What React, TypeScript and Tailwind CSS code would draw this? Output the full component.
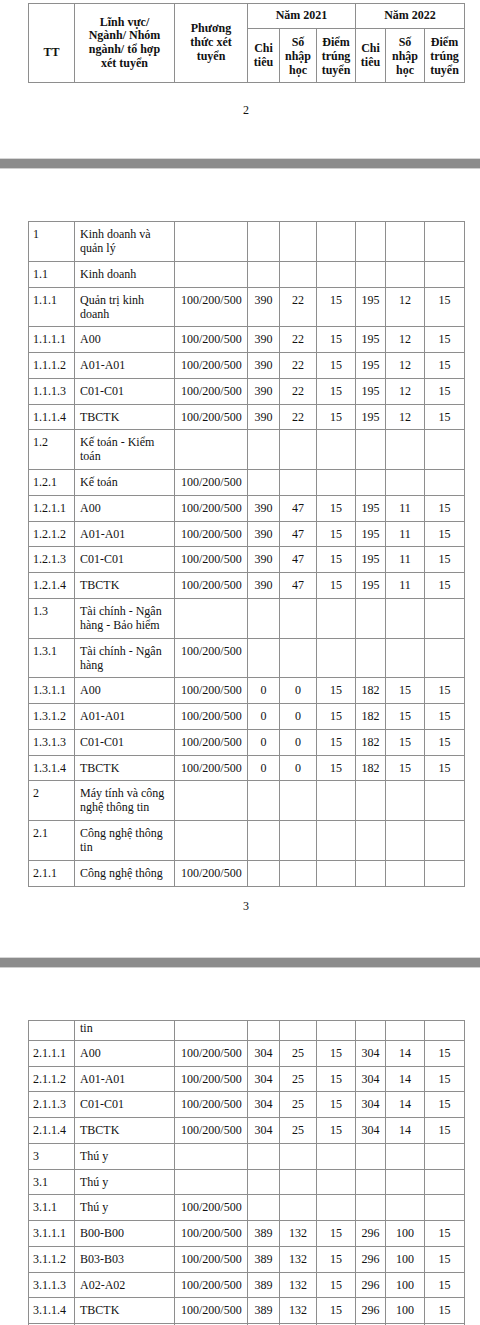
import type { ReactNode } from "react";

type Row = {
    tt: string;
    name: string;
    method?: string;
    values?: string[];
    tall?: boolean;
    short?: boolean;
};

const COLS = "grid w-fit grid-cols-[46px_100px_73px_32px_37px_39px_30px_39px_40px]";

const kd = ["390", "22", "15", "195", "12", "15"];
const kt = ["390", "47", "15", "195", "11", "15"];
const tc = ["0", "0", "15", "182", "15", "15"];
const cn = ["304", "25", "15", "304", "14", "15"];
const ty = ["389", "132", "15", "296", "100", "15"];
const M = "100/200/500";

const page3: Row[] = [
    { tt: "1", name: "Kinh doanh và\nquản lý", tall: true },
    { tt: "1.1", name: "Kinh doanh" },
    { tt: "1.1.1", name: "Quản trị kinh\ndoanh", method: M, values: kd, tall: true },
    { tt: "1.1.1.1", name: "A00", method: M, values: kd },
    { tt: "1.1.1.2", name: "A01-A01", method: M, values: kd },
    { tt: "1.1.1.3", name: "C01-C01", method: M, values: kd },
    { tt: "1.1.1.4", name: "TBCTK", method: M, values: kd },
    { tt: "1.2", name: "Kế toán - Kiểm\ntoán", tall: true },
    { tt: "1.2.1", name: "Kế toán", method: M },
    { tt: "1.2.1.1", name: "A00", method: M, values: kt },
    { tt: "1.2.1.2", name: "A01-A01", method: M, values: kt },
    { tt: "1.2.1.3", name: "C01-C01", method: M, values: kt },
    { tt: "1.2.1.4", name: "TBCTK", method: M, values: kt },
    { tt: "1.3", name: "Tài chính - Ngân\nhàng - Bảo hiểm", tall: true },
    { tt: "1.3.1", name: "Tài chính - Ngân\nhàng", method: M, tall: true },
    { tt: "1.3.1.1", name: "A00", method: M, values: tc },
    { tt: "1.3.1.2", name: "A01-A01", method: M, values: tc },
    { tt: "1.3.1.3", name: "C01-C01", method: M, values: tc },
    { tt: "1.3.1.4", name: "TBCTK", method: M, values: tc },
    { tt: "2", name: "Máy tính và công\nnghệ thông tin", tall: true },
    { tt: "2.1", name: "Công nghệ thông\ntin", tall: true },
    { tt: "2.1.1", name: "Công nghệ thông", method: M },
];

const page4: Row[] = [
    { tt: "", name: "tin", short: true },
    { tt: "2.1.1.1", name: "A00", method: M, values: cn },
    { tt: "2.1.1.2", name: "A01-A01", method: M, values: cn },
    { tt: "2.1.1.3", name: "C01-C01", method: M, values: cn },
    { tt: "2.1.1.4", name: "TBCTK", method: M, values: cn },
    { tt: "3", name: "Thú y" },
    { tt: "3.1", name: "Thú y" },
    { tt: "3.1.1", name: "Thú y", method: M },
    { tt: "3.1.1.1", name: "B00-B00", method: M, values: ty },
    { tt: "3.1.1.2", name: "B03-B03", method: M, values: ty },
    { tt: "3.1.1.3", name: "A02-A02", method: M, values: ty },
    { tt: "3.1.1.4", name: "TBCTK", method: M, values: ty },
    { tt: "", name: "" },
];

function BodyRow({ row }: { row: Row }) {
    const height = row.short ? "h-[20px]" : row.tall ? "h-[39.8px]" : "h-[25.75px]";
    const pad = row.short ? "pt-[0px]" : "pt-[5px]";
    const values = row.values ?? ["", "", "", "", "", ""];
    return (
        <div className={`${COLS} ${height} border-b border-[#8e8e8e]`}>
            <div className={`border-r border-[#8e8e8e] pl-[4px] ${pad}`}>{row.tt}</div>
            <div className={`whitespace-pre-line border-r border-[#8e8e8e] pl-[5px] ${pad}`}>{row.name}</div>
            <div className={`border-r border-[#8e8e8e] pl-[6px] ${pad}`}>{row.method}</div>
            {values.map((value, i) => (
                <div key={i} className={`border-r border-[#8e8e8e] text-center ${pad}`}>
                    {value}
                </div>
            ))}
        </div>
    );
}

function HeadCell({ children, className = "" }: { children: ReactNode; className?: string }) {
    return <div className={`flex items-center justify-center whitespace-pre-line border-r border-b border-[#8e8e8e] text-center ${className}`}>{children}</div>;
}

function PageBreak({ className = "" }: { className?: string }) {
    return (
        <div className={className}>
            <div className="h-px bg-[#d6d6d6]" />
            <div className="h-[9px] bg-[#8c8c8c]" />
            <div className="h-px bg-[#cfcfcf]" />
        </div>
    );
}

export default function App() {
    return (
        <div className="h-[1325px] w-[480px] overflow-hidden bg-white [font-family:'Liberation_Serif','Times_New_Roman',serif] text-[12px] leading-[14px] text-[#111]">
            <div className="pt-[3px]">
                <div className={`${COLS} ml-[28px] grid-rows-[25px_54px] border-l border-t border-[#8e8e8e] font-bold leading-[13.7px]`}>
                    <HeadCell className="row-span-2 pt-[20px]">TT</HeadCell>
                    <HeadCell className="row-span-2">{"Lĩnh vực/\nNgành/ Nhóm\nngành/ tổ hợp\nxét tuyển"}</HeadCell>
                    <HeadCell className="row-span-2">{"Phương\nthức xét\ntuyển"}</HeadCell>
                    <HeadCell className="col-span-3">Năm 2021</HeadCell>
                    <HeadCell className="col-span-3">Năm 2022</HeadCell>
                    <HeadCell>{"Chi\ntiêu"}</HeadCell>
                    <HeadCell className="pt-[3px]">{"Số\nnhập\nhọc"}</HeadCell>
                    <HeadCell className="pt-[3px]">{"Điểm\ntrúng\ntuyển"}</HeadCell>
                    <HeadCell>{"Chi\ntiêu"}</HeadCell>
                    <HeadCell className="pt-[3px]">{"Số\nnhập\nhọc"}</HeadCell>
                    <HeadCell className="pt-[3px]">{"Điểm\ntrúng\ntuyển"}</HeadCell>
                </div>
            </div>
            <div className="ml-[28px] mt-[20px] w-[436px] text-center">2</div>

            <PageBreak className="mt-[41px]" />

            <div className="ml-[28px] mt-[52px] w-fit border-l border-t border-[#8e8e8e]">
                {page3.map((row, i) => (
                    <BodyRow key={i} row={row} />
                ))}
            </div>
            <div className="ml-[28px] mt-[12px] w-[436px] text-center">3</div>

            <PageBreak className="mt-[44px]" />

            <div className="ml-[28px] mt-[52px] w-fit border-l border-t border-[#8e8e8e]">
                {page4.map((row, i) => (
                    <BodyRow key={i} row={row} />
                ))}
            </div>
        </div>
    );
}
